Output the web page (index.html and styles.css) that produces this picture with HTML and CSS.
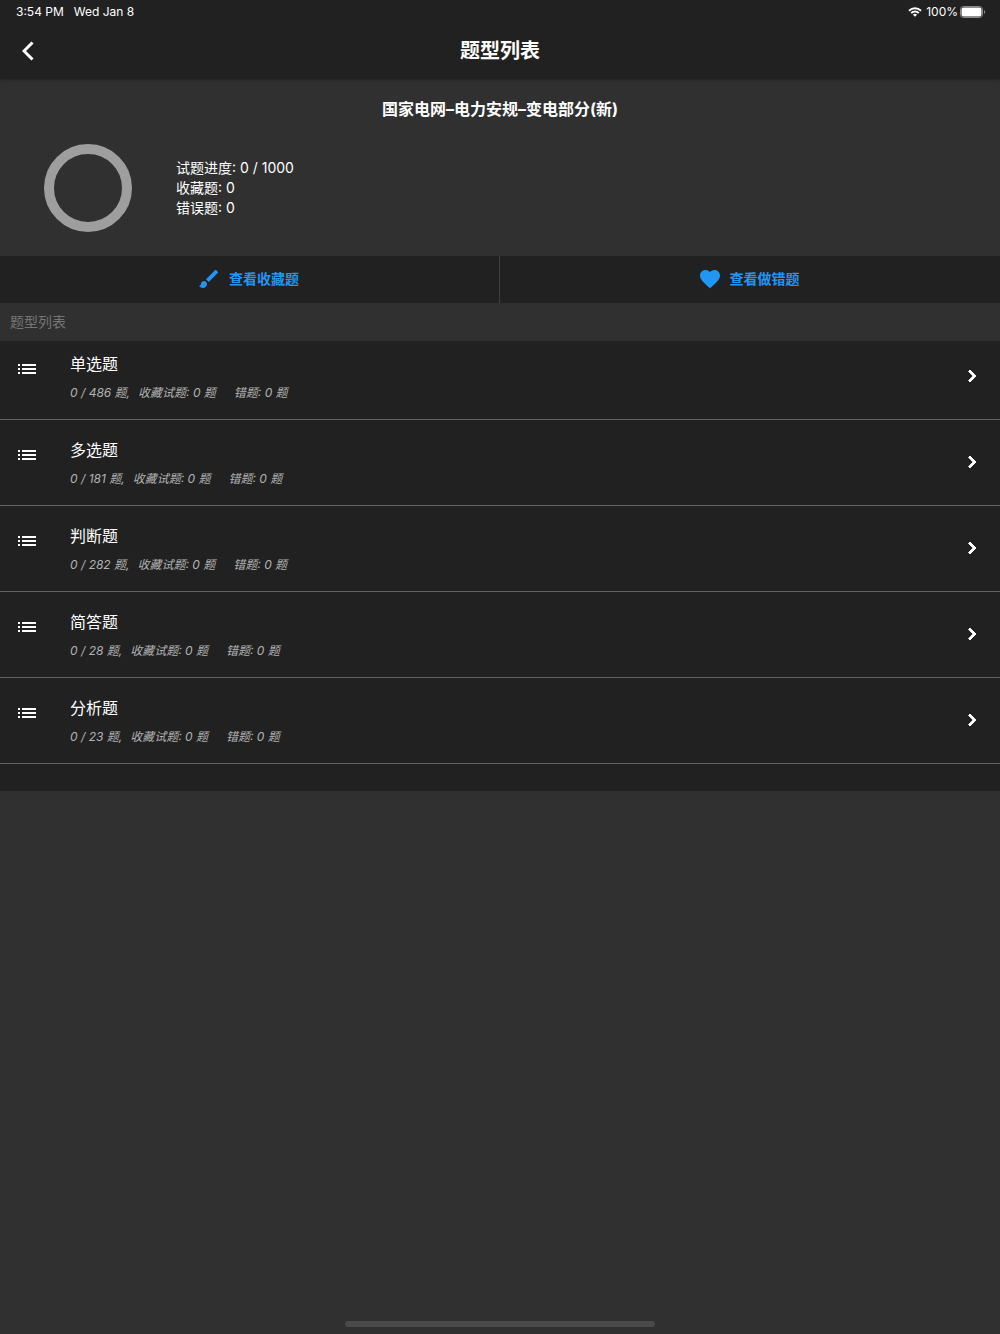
FILE: index.html
```html
<!DOCTYPE html>
<html lang="zh-CN">

<head>
    <meta charset="UTF-8" />
    <meta name="viewport" content="width=device-width, initial-scale=1" />
    <title>题型列表</title>
    <link rel="stylesheet" href="styles.css">
</head>

<body>
    <!-- icons used more than once -->
    <svg class="sprite" aria-hidden="true">
        <symbol id="icon-list" viewBox="0 0 24 24">
            <path d="M3 13h2v-2H3v2zm0 4h2v-2H3v2zm0-8h2V7H3v2zm4 4h14v-2H7v2zm0 4h14v-2H7v2zM7 7v2h14V7H7z" />
        </symbol>
        <symbol id="icon-right" viewBox="0 0 24 24">
            <path d="M10 6L8.59 7.41 13.17 12l-4.58 4.59L10 18l6-6z" />
        </symbol>
    </svg>

    <header class="topbar">
        <div class="status">
            <span class="time">3:54 PM</span>
            <span class="date">Wed Jan 8</span>
            <svg class="wifi" viewBox="0 0 14 10" aria-hidden="true">
                <path d="M1 3.8a8.6 8.6 0 0 1 12 0M3.2 6.1a5.4 5.4 0 0 1 7.6 0" />
                <path class="dot" d="M7 9.8L4.9 7.7a3 3 0 0 1 4.2 0z" />
            </svg>
            <span>100%</span>
            <svg class="battery" viewBox="0 0 26 12" aria-hidden="true">
                <rect class="shell" x="0.5" y="0.5" width="22" height="11" rx="3" />
                <rect class="level" x="1.500" y="1.500" width="20" height="9" rx="2" />
                <path class="tip" d="M24 4c1.600.6 1.600 3.400 0 4z" />
            </svg>
        </div>
        <div class="appbar">
            <button class="back" type="button" aria-label="返回">
                <svg viewBox="0 0 12 20" aria-hidden="true"><path d="M10.500 1.500L2 10l8.500 8.500" /></svg>
            </button>
            <h1>题型列表</h1>
        </div>
    </header>

    <main>
        <section class="summary">
            <h2>国家电网–电力安规–变电部分(新)</h2>
            <div class="progress">
                <div class="ring"></div>
                <div class="stats">
                    <p>试题进度: 0 / 1000</p>
                    <p>收藏题: 0</p>
                    <p>错误题: 0</p>
                </div>
            </div>
        </section>

        <div class="actions">
            <button type="button">
                <svg viewBox="0 0 24 24" aria-hidden="true">
                    <path d="M7 14c-1.660 0-3 1.340-3 3 0 1.310-1.160 2-2 2 .92 1.220 2.490 2 4 2 2.210 0 4-1.790 4-4 0-1.660-1.340-3-3-3zm13.710-9.370l-1.340-1.340c-.39-.39-1.020-.39-1.410 0L9 12.250 11.750 15l8.960-8.960c.39-.39.39-1.020 0-1.410z" />
                </svg>
                <span>查看收藏题</span>
            </button>
            <button type="button">
                <svg viewBox="0 0 24 24" aria-hidden="true">
                    <path d="M12 21.350l-1.450-1.320C5.400 15.360 2 12.280 2 8.500 2 5.420 4.420 3 7.500 3c1.740 0 3.410.81 4.500 2.090C13.090 3.810 14.760 3 16.500 3 19.580 3 22 5.420 22 8.500c0 3.780-3.400 6.860-8.550 11.540L12 21.350z" />
                </svg>
                <span>查看做错题</span>
            </button>
        </div>

        <h3 class="label">题型列表</h3>

        <ul class="types">
            <li>
                <a href="#">
                    <svg class="lead" aria-hidden="true"><use href="#icon-list" /></svg>
                    <div class="info">
                        <h4>单选题</h4>
                        <p><span>0 / 486 题,</span><span>收藏试题: 0 题</span><span>错题: 0 题</span></p>
                    </div>
                    <svg class="arrow" aria-hidden="true"><use href="#icon-right" /></svg>
                </a>
            </li>
            <li>
                <a href="#">
                    <svg class="lead" aria-hidden="true"><use href="#icon-list" /></svg>
                    <div class="info">
                        <h4>多选题</h4>
                        <p><span>0 / 181 题,</span><span>收藏试题: 0 题</span><span>错题: 0 题</span></p>
                    </div>
                    <svg class="arrow" aria-hidden="true"><use href="#icon-right" /></svg>
                </a>
            </li>
            <li>
                <a href="#">
                    <svg class="lead" aria-hidden="true"><use href="#icon-list" /></svg>
                    <div class="info">
                        <h4>判断题</h4>
                        <p><span>0 / 282 题,</span><span>收藏试题: 0 题</span><span>错题: 0 题</span></p>
                    </div>
                    <svg class="arrow" aria-hidden="true"><use href="#icon-right" /></svg>
                </a>
            </li>
            <li>
                <a href="#">
                    <svg class="lead" aria-hidden="true"><use href="#icon-list" /></svg>
                    <div class="info">
                        <h4>简答题</h4>
                        <p><span>0 / 28 题,</span><span>收藏试题: 0 题</span><span>错题: 0 题</span></p>
                    </div>
                    <svg class="arrow" aria-hidden="true"><use href="#icon-right" /></svg>
                </a>
            </li>
            <li>
                <a href="#">
                    <svg class="lead" aria-hidden="true"><use href="#icon-list" /></svg>
                    <div class="info">
                        <h4>分析题</h4>
                        <p><span>0 / 23 题,</span><span>收藏试题: 0 题</span><span>错题: 0 题</span></p>
                    </div>
                    <svg class="arrow" aria-hidden="true"><use href="#icon-right" /></svg>
                </a>
            </li>
        </ul>
    </main>

    <div class="homebar"></div>
</body>

</html>
```

FILE: styles.css
```css
* {
    box-sizing: border-box;
}

body {
    margin: 0;
    min-height: 100vh;
    display: flex;
    flex-direction: column;
    background: #303030;
    color: #fff;
    font-family: Inter, "Noto Sans CJK SC", sans-serif;
    font-size: 14px;
}

h1, h2, h3, h4, p, ul {
    margin: 0;
    padding: 0;
}

button {
    border: none;
    padding: 0;
    background: none;
    color: inherit;
    font: inherit;
    cursor: pointer;
}

svg {
    fill: currentColor;
    flex: none;
}

.sprite {
    display: none;
}

/* Status bar + title */
.topbar {
    background: #212121;
    box-shadow: 0 1px 4px rgba(0, 0, 0, 0.3);
}

.status {
    display: flex;
    align-items: center;
    height: 23px;
    padding: 0 14px 0 16px;
    font-size: 12px;
}

.date {
    margin-left: 10px;
    margin-right: auto;
}

.wifi {
    width: 14px;
    height: 10px;
    margin-right: 4px;
    fill: none;
    stroke: #fff;
    stroke-width: 2;
}

.wifi .dot {
    fill: #fff;
    stroke: none;
}

.battery {
    width: 26px;
    height: 12px;
    margin-left: 2px;
}

.battery .shell {
    fill: none;
    stroke: #8a8a8a;
}

.battery .tip {
    fill: #8a8a8a;
}

.appbar {
    display: grid;
    grid-template-columns: 55px 1fr 55px;
    align-items: center;
    height: 56px;
}

.appbar h1 {
    font-size: 20px;
    font-weight: 600;
    line-height: 28px;
    text-align: center;
}

.back {
    display: flex;
    align-items: center;
    justify-content: center;
    height: 56px;
}

.back svg {
    width: 12px;
    height: 20px;
    fill: none;
    stroke: #fff;
    stroke-width: 3;
}

/* Progress summary */
.summary {
    padding: 18px 44px 24px;
}

.summary h2 {
    font-size: 16px;
    font-weight: 700;
    line-height: 24px;
    text-align: center;
}

.progress {
    display: flex;
    align-items: center;
    gap: 44px;
    margin-top: 23px;
}

.ring {
    width: 88px;
    height: 88px;
    border: 10px solid #9e9e9e;
    border-radius: 50%;
}

.stats p {
    line-height: 20px;
}

/* Action buttons */
.actions {
    display: grid;
    grid-template-columns: 1fr 1fr;
    background: #212121;
}

.actions button {
    display: flex;
    align-items: center;
    justify-content: center;
    gap: 8px;
    height: 47px;
    padding: 0 3px 1px 0;
    color: #2196f3;
    font-weight: 600;
    line-height: 20px;
}

.actions button:first-child {
    border-right: 1px solid #404040;
}

.actions svg {
    width: 24px;
    height: 24px;
}

.label {
    padding: 0 10px;
    color: #757575;
    font-size: 14px;
    font-weight: 400;
    line-height: 38px;
}

/* Question types */
.types {
    list-style: none;
    padding-bottom: 27px;
    background: #212121;
}

.types li {
    border-bottom: 1px solid #616161;
}

.types li + li {
    padding-top: 7px;
}

.types a {
    display: flex;
    align-items: center;
    height: 78px;
    padding: 0 16px 8px 15px;
    color: inherit;
    text-decoration: none;
}

.lead {
    width: 24px;
    height: 24px;
    align-self: flex-start;
    margin: 16px 31px 0 0;
}

.info {
    flex: 1;
    align-self: flex-start;
    padding-top: 11px;
}

.info h4 {
    font-size: 16px;
    font-weight: 400;
    line-height: 24px;
}

.info p {
    display: flex;
    margin-top: 7px;
    color: #b3b3b3;
    font-size: 12px;
    font-style: italic;
    line-height: 20px;
}

.info span:nth-child(2) {
    margin: 0 18px 0 8px;
}

.arrow {
    width: 24px;
    height: 24px;
    stroke: #fff;
    stroke-width: 1;
}

.homebar {
    width: 31%;
    height: 6px;
    margin: auto auto 7px;
    border-radius: 3px;
    background: #4a4a4a;
}
```
